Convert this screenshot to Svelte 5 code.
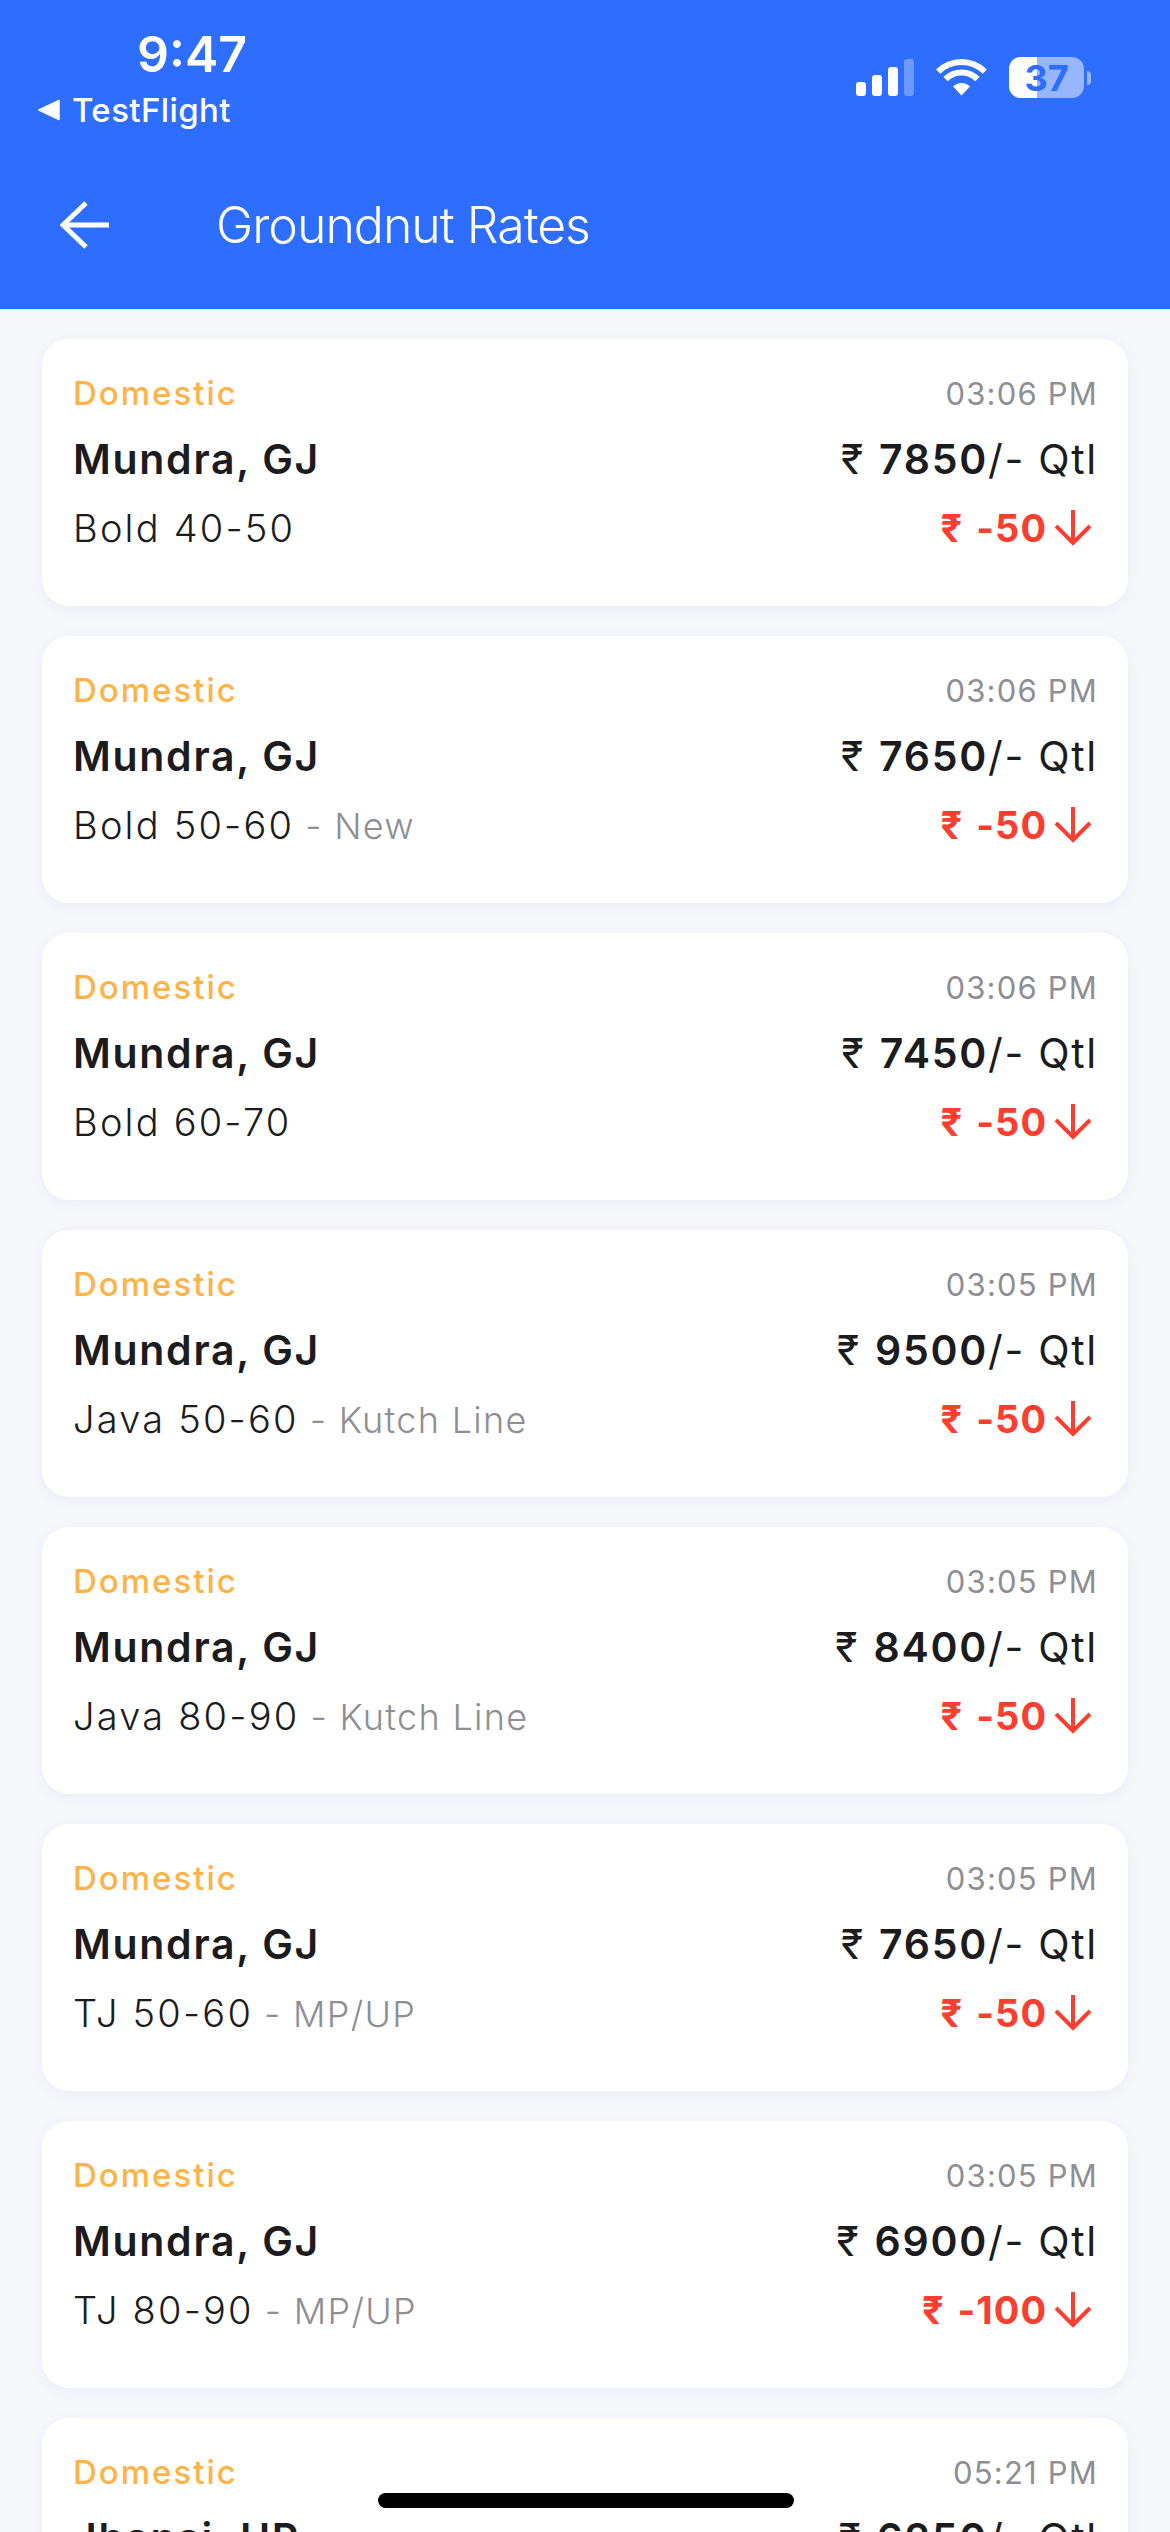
<script>
  const rows = [
    { time: '03:06 PM', city: 'Mundra, GJ', price: 7850, name: 'Bold 40-50', delta: -50 },
    { time: '03:06 PM', city: 'Mundra, GJ', price: 7650, name: 'Bold 50-60', note: 'New', delta: -50 },
    { time: '03:06 PM', city: 'Mundra, GJ', price: 7450, name: 'Bold 60-70', delta: -50 },
    { time: '03:05 PM', city: 'Mundra, GJ', price: 9500, name: 'Java 50-60', note: 'Kutch Line', delta: -50 },
    { time: '03:05 PM', city: 'Mundra, GJ', price: 8400, name: 'Java 80-90', note: 'Kutch Line', delta: -50 },
    { time: '03:05 PM', city: 'Mundra, GJ', price: 7650, name: 'TJ 50-60', note: 'MP/UP', delta: -50 },
    { time: '03:05 PM', city: 'Mundra, GJ', price: 6900, name: 'TJ 80-90', note: 'MP/UP', delta: -100 },
    { time: '05:21 PM', city: 'Jhansi, UP', price: 6250, name: 'Bold 40-50', delta: -50 }
  ];
</script>

<div class="screen">
  <header class="head">
    <div class="status">
      <div class="status-left">
        <span class="clock">9:47</span>
        <span class="back-app">
          <svg width="22" height="22" viewBox="0 0 22 22"><path d="M21 1.5v19L1 11z" fill="#fff" stroke="#fff" stroke-width="1.5" stroke-linejoin="round" /></svg>
          TestFlight
        </span>
      </div>
      <div class="status-right">
        <svg width="58" height="37" viewBox="0 0 58 37">
          <rect x="0" y="23" width="10" height="14" rx="3" fill="#fff" />
          <rect x="16" y="16" width="10" height="21" rx="3" fill="#fff" />
          <rect x="32" y="8" width="10" height="29" rx="3" fill="#fff" />
          <rect x="48" y="0" width="10" height="37" rx="3" fill="#fff" fill-opacity="0.3" />
        </svg>
        <svg class="wifi" width="51" height="37" viewBox="0 0 51 37">
          <path d="M25.5 36.500L17 27.500a12 12 0 0 1 17 0z" fill="#fff" />
          <path d="M9.600 20.100a22.500 22.500 0 0 1 31.800 0" fill="none" stroke="#fff" stroke-width="6" />
          <path d="M2.200 12.700a33 33 0 0 1 46.600 0" fill="none" stroke="#fff" stroke-width="6" />
        </svg>
        <div class="battery">
          <div class="cell">
            <div class="level"></div>
            <span class="pct">37</span>
          </div>
          <div class="nub"></div>
        </div>
      </div>
    </div>
    <div class="bar">
      <svg class="back" width="50" height="48" viewBox="0 0 50 48">
        <path d="M49 24H3M26 2L3 24l23 22" fill="none" stroke="#fff" stroke-width="5" />
      </svg>
      <h1>Groundnut Rates</h1>
    </div>
  </header>

  <main class="list">
    {#each rows as r}
      <article class="card">
        <div class="line">
          <span class="kind">Domestic</span>
          <span class="time">{r.time}</span>
        </div>
        <div class="line mid">
          <span class="city">{r.city}</span>
          <span class="price"><i>₹</i> <b>{r.price}</b>/- Qtl</span>
        </div>
        <div class="line low">
          <span class="name">{r.name}{#if r.note}<em>- {r.note}</em>{/if}</span>
          <span class="delta"><span><i>₹</i> {r.delta}</span>
            <svg width="38" height="36" viewBox="0 0 38 36">
              <path d="M19 0v33M2 16l17 17 17-17" fill="none" stroke="#fb3e30" stroke-width="4" />
            </svg>
          </span>
        </div>
      </article>
    {/each}
  </main>

  <div class="home"></div>
</div>

<style>
  :global(body) { margin: 0; background: #f5f7fb; }
  .screen {
    position: relative; width: 1170px; height: 2532px; overflow: hidden;
    background: #f5f7fb; font-family: Inter, 'Noto Sans', sans-serif; color: #1c1c1e;
  }
  .head { height: 309px; background: #2d6dff; color: #fff; box-sizing: border-box; }
  .status { display: flex; justify-content: space-between; height: 180px; }
  .status-left { display: flex; flex-direction: column; padding: 23px 0 0 38px; }
  .clock { font-size: 50px; font-weight: 600; line-height: 62px; margin-left: 99px; }
  .back-app { display: flex; align-items: center; gap: 12px; font-size: 33px; font-weight: 500; line-height: 40px; margin-top: 5px; letter-spacing: 0.4px; }
  .status-right { display: flex; align-items: center; padding: 22px 79px 0 0; height: 41px; margin-top: 35px; }
  .wifi { margin-left: 22px; }
  .battery { display: flex; align-items: center; margin-left: 22px; gap: 3px; }
  .cell { position: relative; width: 75px; height: 41px; border-radius: 12px; background: rgba(255,255,255,0.5); overflow: hidden; display: flex; align-items: center; justify-content: center; }
  .level { position: absolute; left: 0; top: 0; bottom: 0; width: 28px; background: #fff; }
  .pct { position: relative; font-size: 36px; font-weight: 700; color: #2d6dff; line-height: 1; }
  .nub { width: 4px; height: 14px; background: rgba(255,255,255,0.5); border-radius: 0 4px 4px 0; }
  .bar { display: flex; align-items: center; padding-left: 60px; height: 90px; }
  .back { flex: none; }
  h1 { margin: 0 0 0 106px; font-size: 50px; font-weight: 300; letter-spacing: -1px; line-height: 60px; }
  .list { display: flex; flex-direction: column; gap: 30px; padding: 30px 42px 0; }
  .card {
    flex: none; height: 267px; box-sizing: border-box; padding: 34px 30px 0 31px; background: #fff;
    border-radius: 27px; box-shadow: 0 3px 14px rgba(40, 60, 110, 0.06);
  }
  .line { display: flex; justify-content: space-between; align-items: baseline; height: 40px; }
  .mid { margin-top: 21px; height: 50px; }
  .low { margin-top: 21px; height: 46px; }
  .kind { font-size: 33px; font-weight: 500; color: #ffb347; letter-spacing: 2px; line-height: 40px; }
  .time { font-size: 31px; color: #8e8e93; letter-spacing: 1.2px; line-height: 40px; }
  .city { font-size: 41px; font-weight: 600; letter-spacing: 1.7px; line-height: 50px; }
  .price { font-size: 41px; letter-spacing: 1.7px; line-height: 50px; }
  .price i { font-style: normal; margin-right: 1px; }
  .delta i { font-style: normal; margin-right: 3px; }
  .price b { font-weight: 600; }
  .name { font-size: 38px; font-weight: 300; letter-spacing: 2.2px; line-height: 46px; }
  .name em { font-style: normal; font-size: 36px; color: #8e8e93; margin-left: 11px; letter-spacing: 1.3px; }
  .delta { display: flex; align-items: center; gap: 7px; margin-right: 6px; font-size: 38px; font-weight: 700; color: #fb3e30; letter-spacing: 1px; line-height: 46px; }
  .home { position: absolute; left: 378px; top: 2493px; width: 416px; height: 15px; border-radius: 8px; background: #000; }
</style>
